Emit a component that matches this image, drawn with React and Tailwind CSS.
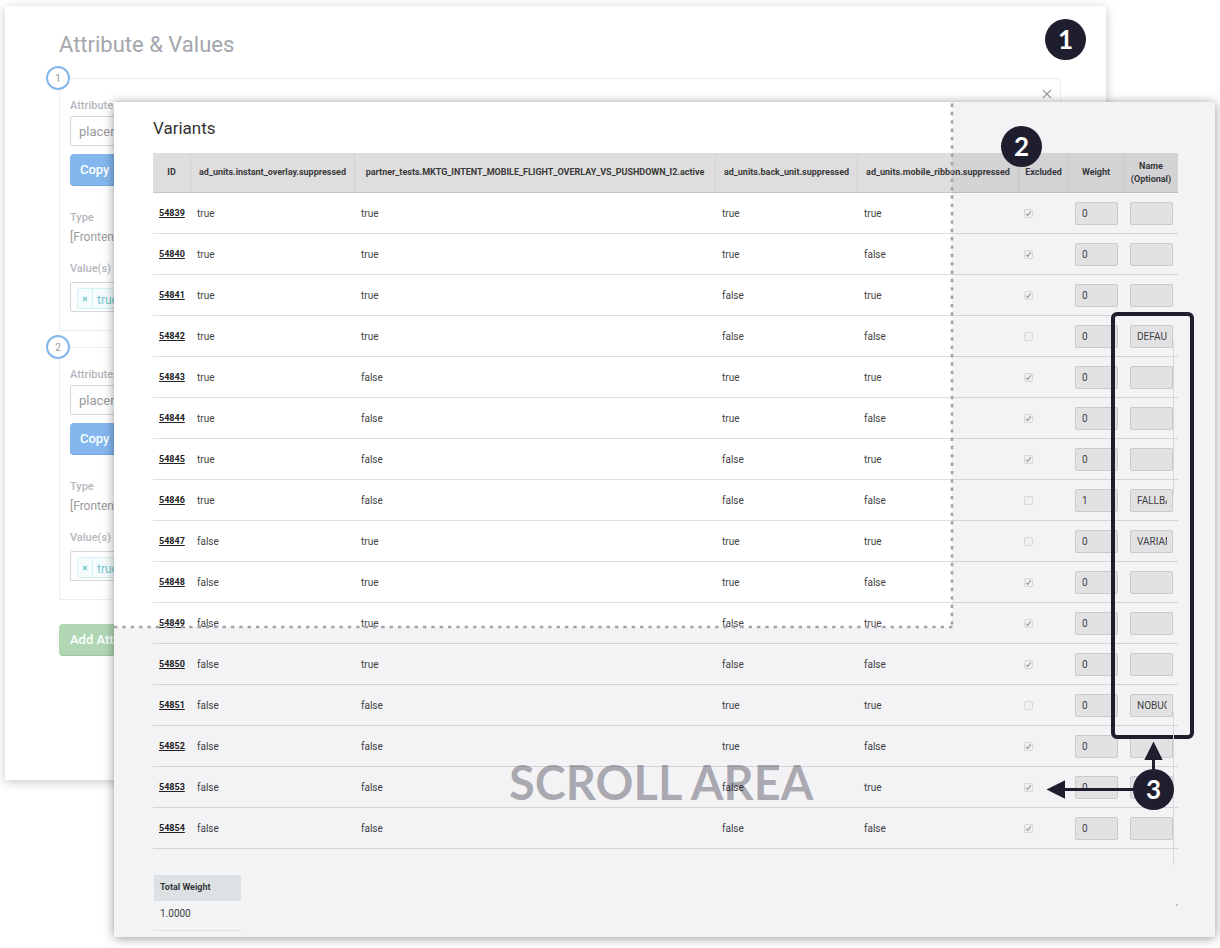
import React from "react";

const ROWS = [
  ["54839", "true", "true", "true", "true", true, "0", ""],
  ["54840", "true", "true", "true", "false", true, "0", ""],
  ["54841", "true", "true", "false", "true", true, "0", ""],
  ["54842", "true", "true", "false", "false", false, "0", "DEFAULT"],
  ["54843", "true", "false", "true", "true", true, "0", ""],
  ["54844", "true", "false", "true", "false", true, "0", ""],
  ["54845", "true", "false", "false", "true", true, "0", ""],
  ["54846", "true", "false", "false", "false", false, "1", "FALLBACK"],
  ["54847", "false", "true", "true", "true", false, "0", "VARIANT"],
  ["54848", "false", "true", "true", "false", true, "0", ""],
  ["54849", "false", "true", "false", "true", true, "0", ""],
  ["54850", "false", "true", "false", "false", true, "0", ""],
  ["54851", "false", "false", "true", "true", false, "0", "NOBUCKET"],
  ["54852", "false", "false", "true", "false", true, "0", ""],
  ["54853", "false", "false", "false", "true", true, "0", ""],
  ["54854", "false", "false", "false", "false", true, "0", ""],
];

function Callout({ children, className }) {
  return (
    <span
      className={`absolute flex size-[41px] items-center justify-center rounded-full bg-[#1f1e2e] pb-[2px] font-[Lato,sans-serif] text-[26px] leading-none font-bold text-white ${className}`}
    >
      {children}
    </span>
  );
}

function AttributeGroup({ number, closable }) {
  const attributeId = `attribute-${number}`;
  const valuesId = `values-${number}`;
  return (
    <section className="relative flex h-[253px] flex-col items-start rounded-xs border border-[#ededee] px-[10px] pt-5">
      <span className="absolute -top-[13px] -left-[14px] flex size-6 items-center justify-center rounded-full border-2 border-[#83b7ea] bg-white text-[10px] text-[#9b9b9b]">
        {number}
      </span>
      {closable && (
        <button type="button" aria-label="Remove attribute" className="absolute top-[10px] right-2">
          <svg viewBox="0 0 10 10" className="size-[10px]" stroke="#999" strokeWidth="1.1" fill="none">
            <path d="M1 1l8 8M9 1L1 9" />
          </svg>
        </button>
      )}
      <label htmlFor={attributeId} className="text-[11px] leading-[14px] font-medium text-[#b4b7bc]">
        Attribute *
      </label>
      <input
        id={attributeId}
        defaultValue="placement"
        className="mt-[3px] h-[30px] w-60 rounded-xs border border-[#d6d6d8] bg-white px-2 text-[13px] text-[#9a9a9a]"
      />
      <button
        type="button"
        className="mt-2 h-8 rounded-sm border-b border-[#76a6dc] bg-[#83b7ee] px-[10px] text-[13px] font-medium text-white"
      >
        Copy
      </button>
      <span className="mt-[25px] text-[11px] leading-[14px] font-medium text-[#b4b7bc]">Type</span>
      <span className="mt-1 text-[12px] leading-4 text-[#9a9a9a]">[Frontend]</span>
      <label htmlFor={valuesId} className="mt-[17px] text-[11px] leading-[14px] font-medium text-[#b4b7bc]">
        Value(s) *
      </label>
      <div className="mt-[6px] flex h-[30px] w-60 items-center rounded-xs border border-[#d6d6d8] bg-white px-[6px] pt-[3px]">
        <span className="flex h-[21px] shrink-0 items-center rounded-xs border border-[#d3f0f3] bg-[#f4fcfd] text-[12px] text-[#74c6cb]">
          <button
            type="button"
            aria-label="Remove true"
            className="flex h-full w-[15px] items-center justify-center border-r border-[#d3f0f3] pt-px"
          >
            <svg viewBox="0 0 6 6" className="size-[6px]" stroke="currentColor" strokeWidth="1.1" fill="none">
              <path d="M1 1l4 4M5 1L1 5" />
            </svg>
          </button>
          <span className="px-1 pt-[2px]">true</span>
        </span>
        <input id={valuesId} className="min-w-0 flex-1 bg-transparent" />
      </div>
    </section>
  );
}

function VariantRow({ row }) {
  const [id, overlay, partner, back, ribbon, excluded, weight, name] = row;
  const cell = "border-b border-[#dfdfdf] px-[6px] py-0";
  return (
    <tr className="h-[41px]">
      <td className={cell}>
        <a href={`#${id}`} className="text-[9px] font-bold text-[#222] underline">
          {id}
        </a>
      </td>
      <td className={cell}>{overlay}</td>
      <td className={cell}>{partner}</td>
      <td className={cell}>{back}</td>
      <td className={cell}>{ribbon}</td>
      <td className="border-b border-[#dfdfdf] px-[5px] py-0">
        <label className="grid size-[9px] place-items-center">
          <input
            type="checkbox"
            aria-label={`Exclude ${id}`}
            defaultChecked={excluded}
            className="peer col-start-1 row-start-1 size-[9px] appearance-none rounded-[2px] border border-[#e3e3e3] bg-[#fcfcfc]"
          />
          <svg
            viewBox="0 0 9 9"
            className="pointer-events-none invisible col-start-1 row-start-1 size-[9px] peer-checked:visible"
            fill="none"
            stroke="#999"
            strokeWidth="1.1"
          >
            <path d="M2.2 4.8l1.6 1.7 3-4.3" />
          </svg>
        </label>
      </td>
      <td className={cell}>
        <input
          aria-label={`Weight of ${id}`}
          defaultValue={weight}
          className="block h-[23px] w-full rounded-xs border border-[#d4d4d4] bg-[#eeeeee] px-[6px] text-[10px]"
        />
      </td>
      <td className="border-b border-[#dfdfdf] py-0 pr-[5px] pl-[6px]">
        <input
          aria-label={`Name of ${id}`}
          defaultValue={name}
          className="block h-[23px] w-full rounded-xs border border-[#d4d4d4] bg-[#eeeeee] pr-[5px] pl-[6px] text-[10px]"
        />
      </td>
    </tr>
  );
}

export default function App() {
  const head = "border-r border-b border-r-[#d2d2d2] border-b-[#c6c6c6] p-0 font-bold";
  return (
    <main className="grid items-start overflow-hidden bg-white pb-[11px] font-[Roboto,sans-serif]">
      <section className="relative col-start-1 row-start-1 mt-[6px] mr-[114px] ml-[5px] bg-white pr-[45px] pb-[124px] pl-[54px] shadow-[0_2px_10px_rgba(0,0,0,0.22)]">
        <h1 className="pt-[25px] text-[22px] leading-7 text-[#a3a6ac]">Attribute &amp; Values</h1>
        <div className="mt-[19px] flex flex-col gap-4">
          <AttributeGroup number={1} closable />
          <AttributeGroup number={2} />
        </div>
        <button
          type="button"
          className="mt-6 h-8 rounded-sm border-b border-[#9fc6a4] bg-[#b0d6b4] px-[11px] text-[13px] font-medium text-white"
        >
          Add Attribute
        </button>
        <Callout className="top-[13px] right-5">1</Callout>
      </section>

      <section className="relative col-start-1 row-start-1 mt-[102px] mr-[5px] ml-[114px] bg-white pt-4 pr-[37px] pb-[6px] pl-[39px] text-[10px] text-[#444] shadow-[0_1px_10px_rgba(0,0,0,0.42)]">
        <h2 className="text-[17px] leading-5 text-[#333]">Variants</h2>
        <table className="mt-[15px] w-full table-fixed border-separate border-spacing-0 text-left">
          <colgroup>
            <col className="w-[38px]" />
            <col className="w-[164px]" />
            <col className="w-[361px]" />
            <col className="w-[142px]" />
            <col className="w-[161px]" />
            <col className="w-[50px]" />
            <col className="w-[55px]" />
            <col className="w-[54px]" />
          </colgroup>
          <thead>
            <tr className="h-10 bg-[#dedede] text-center text-[9px] leading-[13px] text-[#3a3a3a]">
              <th className={head}>ID</th>
              <th className={head}>ad_units.instant_overlay.suppressed</th>
              <th className={head}>partner_tests.MKTG_INTENT_MOBILE_FLIGHT_OVERLAY_VS_PUSHDOWN_I2.active</th>
              <th className={head}>ad_units.back_unit.suppressed</th>
              <th className={head}>ad_units.mobile_ribbon.suppressed</th>
              <th className={head}>Excluded</th>
              <th className={head}>Weight</th>
              <th className="border-b border-[#c6c6c6] p-0 font-bold">
                Name
                <br />
                (Optional)
              </th>
            </tr>
          </thead>
          <tbody>
            {ROWS.map((row) => (
              <VariantRow key={row[0]} row={row} />
            ))}
          </tbody>
        </table>
        <table className="mt-[26px] ml-px w-[87px] border-separate border-spacing-0 text-left">
          <thead>
            <tr className="h-[26px] bg-[#e7eeed]">
              <th className="p-0 pl-[6px] text-[9px] font-bold text-[#3a3a3a]">Total Weight</th>
            </tr>
          </thead>
          <tbody>
            <tr className="h-[30px]">
              <td className="border-b border-[#ececec] p-0 pb-1 pl-[6px]">1.0000</td>
            </tr>
          </tbody>
        </table>

        <div className="pointer-events-none absolute inset-0 grid grid-cols-[838px_1fr] grid-rows-[525px_1fr]">
          <div />
          <div className="bg-[#10104a]/5" />
          <div className="col-span-2 bg-[#10104a]/5 pt-[128px] pl-[395px]">
            <p className="font-[Lato,sans-serif] text-[47px] leading-[54px] font-bold whitespace-nowrap text-[#1f1e2e]/35">
              SCROLL AREA
            </p>
          </div>
        </div>
        <svg className="pointer-events-none absolute top-0 left-0 h-[527px] w-[840px]" fill="none">
          <path d="M838 1.5V525" stroke="#a4a3aa" strokeWidth="2.6" strokeDasharray="3.4 4.95" />
          <path d="M0 525H840" stroke="#a4a3aa" strokeWidth="2.6" strokeDasharray="3.4 4.95" />
        </svg>
        <div className="pointer-events-none absolute top-[210px] right-[21px] h-[427px] w-[83px] rounded-md border-4 border-[#1f1e2e]" />
        <svg className="pointer-events-none absolute top-[236px] right-[37px] h-[568px] w-[134px]" viewBox="0 0 134 568">
          <path d="M129.5 4v153M129.5 374v153" stroke="#d8d8dc" strokeWidth="1" />
          <circle cx="133" cy="567" r="0.8" fill="#888" />
          <path d="M20 451.5H100M109.5 421V440" stroke="#1f1e2e" strokeWidth="3" />
          <path d="M2.5 451.5l18.500-9.300v18.600zM109.500 403.500l-9.200 18.500h18.400z" fill="#1f1e2e" />
        </svg>
        <Callout className="top-6 right-[173px]">2</Callout>
        <Callout className="top-[667px] right-[41px]">3</Callout>
      </section>
    </main>
  );
}
